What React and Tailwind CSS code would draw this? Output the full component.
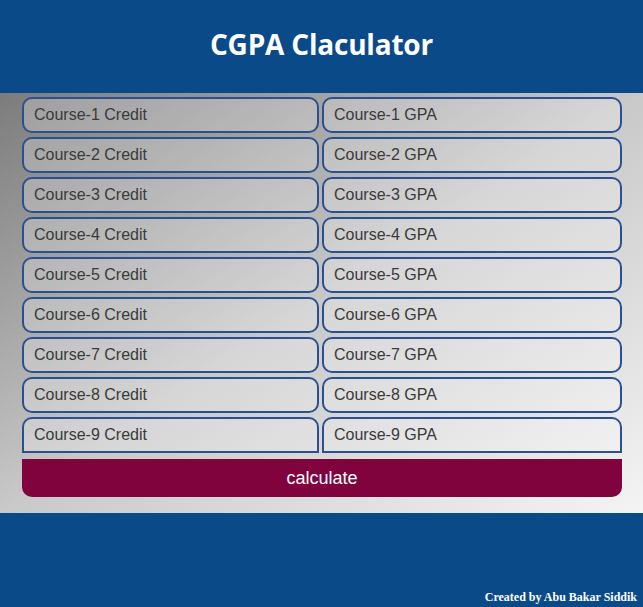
import React, { useState } from "react";

const COURSES = [1, 2, 3, 4, 5, 6, 7, 8, 9];

function App() {
  const [credits, setCredits] = useState({});
  const [gpas, setGpas] = useState({});

  const calculate = () => {
    let total = 0;
    let sum = 0;
    COURSES.forEach(n => {
      const c = parseFloat(credits[n]);
      const g = parseFloat(gpas[n]);
      if (c > 0 && !isNaN(g)) {
        total += c;
        sum += c * g;
      }
    });
    if (total) alert(`CGPA: ${(sum / total).toFixed(2)}`);
  };

  return (
    <div className="w-full min-h-screen flex flex-col font-['Liberation_Sans',Arial,sans-serif]">
      <header className="h-[93px] bg-[#0b4a88] flex items-center justify-center">
        <h1 className="text-[28px] font-bold text-white tracking-[-0.2px] font-['Open_Sans',sans-serif] leading-none mt-[-6px]">
          CGPA Claculator
        </h1>
      </header>

      <main className="bg-linear-to-br from-[#7c7c7c] via-[#c9c9c9] to-[#f4f4f4] pt-[4px] pb-[16px] px-[22px]">
        <div className="grid grid-cols-[297px_300px] gap-x-[3px] gap-y-[4px]">
          {COURSES.map(n => (
            <React.Fragment key={n}>
              <input
                value={credits[n] || ""}
                onChange={e => setCredits({ ...credits, [n]: e.target.value })}
                placeholder={`Course-${n} Credit`}
                className={`h-[36px] border-2 border-[#2c4f8f] bg-white/25 px-[10px] text-[16px] text-[#333] placeholder:text-[#3a3a3a] outline-none ${n === 9 ? "rounded-t-[10px]" : "rounded-[10px]"}`}
              />
              <input
                value={gpas[n] || ""}
                onChange={e => setGpas({ ...gpas, [n]: e.target.value })}
                placeholder={`Course-${n} GPA`}
                className={`h-[36px] border-2 border-[#2c4f8f] bg-white/25 px-[10px] text-[16px] text-[#333] placeholder:text-[#3a3a3a] outline-none ${n === 9 ? "rounded-t-[10px]" : "rounded-[10px]"}`}
              />
            </React.Fragment>
          ))}
        </div>
        <button
          onClick={calculate}
          className="mt-[6px] w-[600px] h-[38px] bg-[#80033d] text-white text-[18px] rounded-b-[10px]"
        >
          calculate
        </button>
      </main>

      <footer className="flex-1 bg-[#0b4a88] flex items-end justify-end pr-[6px] pb-[1px]">
        <span className="text-white text-[12px] font-bold font-['Liberation_Serif',serif]">
          Created by Abu Bakar Siddik
        </span>
      </footer>
    </div>
  );
}

export default App;
